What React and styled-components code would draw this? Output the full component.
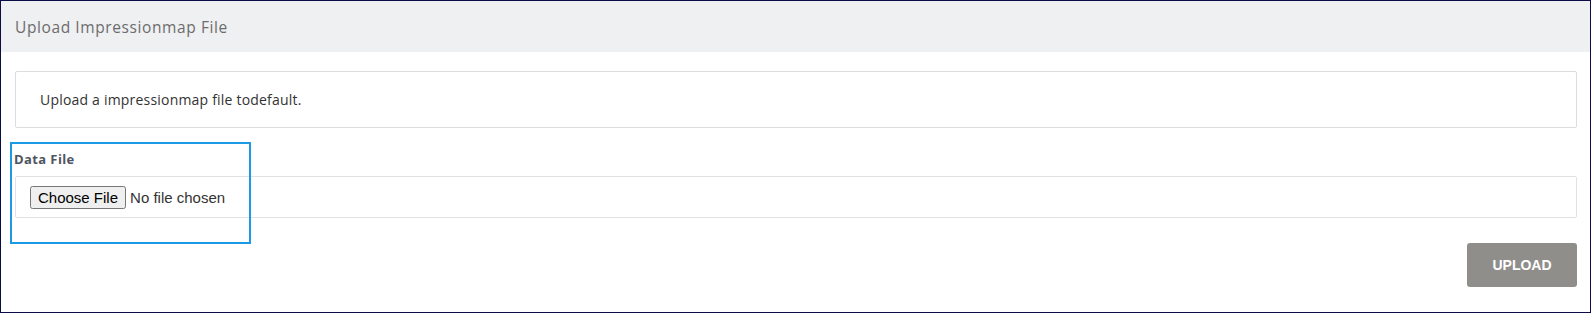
import React from "react";
import styled, {createGlobalStyle} from "styled-components";

const GlobalStyle = createGlobalStyle`
  html, body {
    margin: 0;
    padding: 0;
    background: #ffffff;
  }
`

export default function App() {
    return (
        <>
            <GlobalStyle/>
            <Frame>
                <Header>Upload Impressionmap File</Header>
                <Body>
                    <InfoBox>Upload a impressionmap file todefault.</InfoBox>
                    <FormGroup>
                        <Label htmlFor="data-file">Data File</Label>
                        <FileBox>
                            <FileInput id="data-file" type="file"/>
                        </FileBox>
                    </FormGroup>
                    <Actions>
                        <UploadButton type="button">UPLOAD</UploadButton>
                    </Actions>
                </Body>
                <Highlight/>
            </Frame>
        </>
    );
}

const Frame = styled.div`
  position: relative;
  box-sizing: border-box;
  width: 1591px;
  height: 313px;
  border: 1px solid #0c0c48;
  background: #ffffff;
  font-family: 'Open Sans', 'Liberation Sans', Arial, sans-serif;
`
const Header = styled.div`
  height: 51px;
  padding-left: 14px;
  display: flex;
  align-items: center;
  background: #eff0f2;
  color: #6c6c6c;
  font-size: 15.5px;
  letter-spacing: 0.6px;
`
const Body = styled.div`
  padding: 19px 13px 0 14px;
`
const InfoBox = styled.div`
  box-sizing: border-box;
  height: 57px;
  padding-left: 24px;
  display: flex;
  align-items: center;
  border: 1px solid #dcdddf;
  border-radius: 2px;
  color: #333333;
  font-size: 14px;
  letter-spacing: 0.2px;
`
const FormGroup = styled.div`
  margin-top: 23px;
`
const Label = styled.label`
  display: block;
  margin-left: -1px;
  line-height: 16px;
  margin-bottom: 9px;
  color: #4f5560;
  font-size: 13px;
  font-weight: bold;
  letter-spacing: 0.4px;
`
const FileBox = styled.div`
  box-sizing: border-box;
  height: 42px;
  padding-left: 14px;
  display: flex;
  align-items: center;
  border: 1px solid #e1e2e4;
  border-radius: 2px;
`
const FileInput = styled.input`
  font-family: 'Liberation Sans', Arial, sans-serif;
  font-size: 15px;
  color: #333333;
`
const Actions = styled.div`
  display: flex;
  justify-content: flex-end;
  margin-top: 25px;
`
const UploadButton = styled.button`
  width: 110px;
  height: 44px;
  border: none;
  border-radius: 3px;
  background: #8f8e8b;
  color: #ffffff;
  font-family: 'Liberation Sans', Arial, sans-serif;
  font-size: 14px;
  font-weight: bold;
  cursor: pointer;
`
const Highlight = styled.div`
  position: absolute;
  left: 9px;
  top: 141px;
  width: 241px;
  height: 102px;
  box-sizing: border-box;
  border: 2px solid #1b9be6;
  pointer-events: none;
`
